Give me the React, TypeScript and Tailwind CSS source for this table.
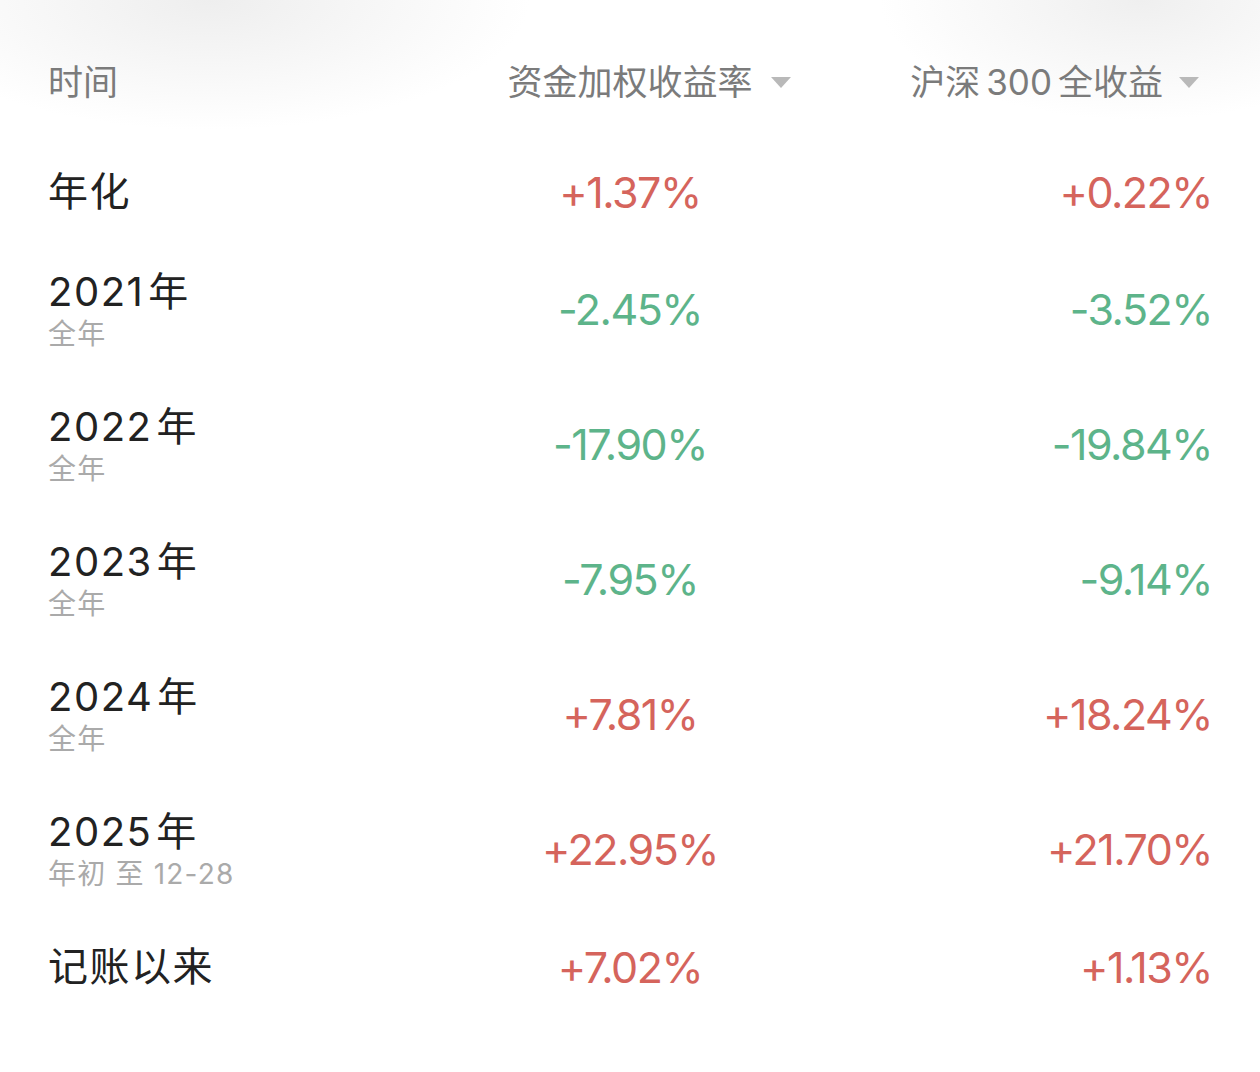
import { ReactNode } from "react";

type Row = {
  label: string;
  sub?: string;
  fund: string;
  index: string;
};

const rows: Row[] = [
  { label: "年化", fund: "+1.37%", index: "+0.22%" },
  { label: "2021年", sub: "全年", fund: "-2.45%", index: "-3.52%" },
  { label: "2022年", sub: "全年", fund: "-17.90%", index: "-19.84%" },
  { label: "2023年", sub: "全年", fund: "-7.95%", index: "-9.14%" },
  { label: "2024年", sub: "全年", fund: "+7.81%", index: "+18.24%" },
  { label: "2025年", sub: "年初 至 12-28", fund: "+22.95%", index: "+21.70%" },
  { label: "记账以来", fund: "+7.02%", index: "+1.13%" },
];

const font = "font-['Inter','Noto_Sans_CJK_SC',sans-serif]";

function Caret() {
  return (
    <svg width="20" height="11" viewBox="0 0 20 11" className="shrink-0">
      <path d="M0 0 H20 L10 11 Z" fill="#b9b9b9" />
    </svg>
  );
}

function Value({ v, align }: { v: string; align: "center" | "right" }) {
  const up = v.startsWith("+");
  return (
    <div
      className={`${align === "center" ? "text-center" : "text-right"} text-[43px] leading-none tracking-[-1.5px] ${
        up ? "text-[#d5645c]" : "text-[#5db48a]"
      }`}
    >
      {v}
    </div>
  );
}

// "2021年" -> digits a touch apart from the 年
function Label({ text }: { text: string }) {
  const m = text.match(/^(\d+)(年)$/);
  if (!m) return <>{text}</>;
  return (
    <>
      {m[1]}
      <span className="ml-[4px]">{m[2]}</span>
    </>
  );
}

function HeaderCell({ children, className }: { children: ReactNode; className?: string }) {
  return <div className={`flex items-center text-[35px] leading-[48px] text-[#7b7b7b] ${className ?? ""}`}>{children}</div>;
}

export default function App() {
  return (
    <main
      className={`${font} min-h-[1072px] w-[1260px] bg-white bg-[radial-gradient(ellipse_320px_130px_at_210px_0px,#eeeeee,#ffffff00),radial-gradient(ellipse_260px_120px_at_1140px_0px,#efefef,#ffffff00)] px-[48px]`}
    >
      <div className="grid grid-cols-3 pt-[58px] pb-[36px]">
        <HeaderCell>时间</HeaderCell>
        <HeaderCell className="justify-center">
          <div className="relative">
            资金加权收益率
            <span className="absolute left-[calc(100%+18px)] top-[19px]">
              <Caret />
            </span>
          </div>
        </HeaderCell>
        <HeaderCell className="justify-end gap-[16px] pr-[13px]">
          <span>
            沪深<span className="mx-[6px]">300</span>全收益
          </span>
          <Caret />
        </HeaderCell>
      </div>

      {rows.map((r) => (
        <div
          key={r.label}
          className={`grid grid-cols-3 items-center ${r.sub ? "h-[135px]" : "h-[100px]"}`}
        >
          <div>
            <div className="text-[40px] leading-[48px] tracking-[1.5px] text-[#222222]">
              <Label text={r.label} />
            </div>
            {r.sub && <div className="text-[28px] leading-[36px] tracking-[1.2px] text-[#aaaaaa]">{r.sub}</div>}
          </div>
          <Value v={r.fund} align="center" />
          <Value v={r.index} align="right" />
        </div>
      ))}
    </main>
  );
}
